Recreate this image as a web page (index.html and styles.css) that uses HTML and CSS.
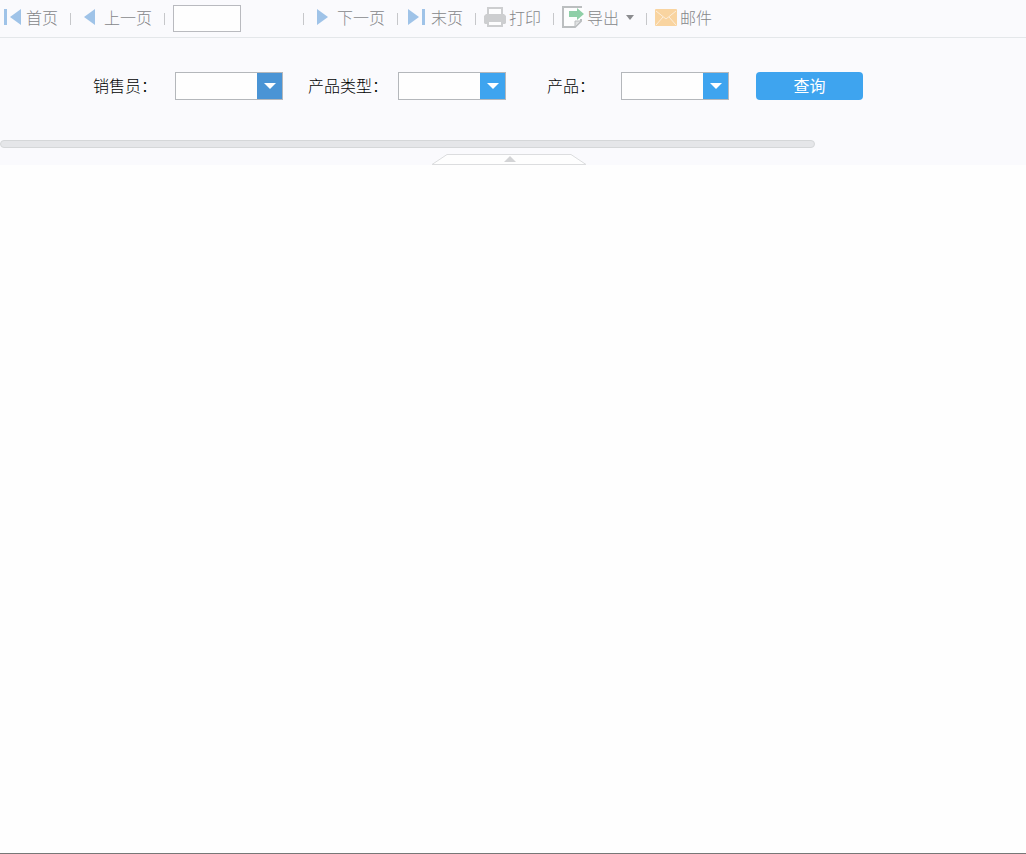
FILE: index.html
```
<!DOCTYPE html>
<html lang="zh-CN">
  <head>
    <meta charset="UTF-8" />
    <meta name="viewport" content="width=device-width, initial-scale=1.0" />
    <title>报表查询</title>
    <link rel="stylesheet" href="styles.css">
  </head>
  <body>
    <div class="toolbar">
      <button type="button" class="tool first">
        <svg width="18" height="16" viewBox="0 0 18 16"><path fill="#9fc3e8" d="M0 0h3v16H0zM17 0v16L6 8z" /></svg>
        首页
      </button>
      <span class="sep"></span>
      <button type="button" class="tool prev">
        <svg width="12" height="16" viewBox="0 0 12 16"><path fill="#9fc3e8" d="M11 0v16L0 8z" /></svg>
        上一页
      </button>
      <span class="sep"></span>
      <input type="text" class="page-input" aria-label="页码" />
      <span class="sep"></span>
      <button type="button" class="tool next">
        <svg width="12" height="16" viewBox="0 0 12 16"><path fill="#9fc3e8" d="M0 0v16l11-8z" /></svg>
        下一页
      </button>
      <span class="sep"></span>
      <button type="button" class="tool last">
        <svg width="18" height="16" viewBox="0 0 18 16"><path fill="#9fc3e8" d="M0 0v16l11-8zM14 0h3v16h-3z" /></svg>
        末页
      </button>
      <span class="sep"></span>
      <button type="button" class="tool print">
        <svg width="22" height="20" viewBox="0 0 22 20">
          <path fill="#cdced0" d="M2 7h18l2 2v7l-1 1H1l-1-1V9z" />
          <path fill="#fdfdfe" stroke="#cdced0" stroke-width="2" d="M4 1h14v7H4zM4 14h14v5H4z" />
        </svg>
        打印
      </button>
      <span class="sep"></span>
      <button type="button" class="tool export">
        <svg width="22" height="22" viewBox="0 0 22 22">
          <path fill="#fdfdfe" stroke="#bbbec0" stroke-width="2" d="M1 1h18v14l-6 6H1z" />
          <path fill="#dfe1e2" stroke="#bbbec0" d="M13 21v-6h6z" />
          <path fill="#fdfdfe" d="M17 2h5v11h-5z" />
          <path fill="#8fcfa8" d="M7 5h8V2l7 6-7 6v-3H7z" />
        </svg>
        导出
        <span class="caret"></span>
      </button>
      <span class="sep"></span>
      <button type="button" class="tool mail">
        <svg width="22" height="17" viewBox="0 0 22 17">
          <rect width="22" height="17" rx="1" fill="#f9d4a0" />
          <path fill="none" stroke="#fdeedb" d="M1 2l10 8 10-8M1 16l7-8M21 16l-7-8" />
        </svg>
        邮件
      </button>
    </div>

    <div class="panel">
      <form class="query">
        <label for="seller">销售员：</label>
        <div class="combo">
          <select id="seller" class="active"><option></option></select>
        </div>
        <label for="category">产品类型：</label>
        <div class="combo">
          <select id="category"><option></option></select>
        </div>
        <label for="product">产品：</label>
        <div class="combo">
          <select id="product"><option></option></select>
        </div>
        <button type="button" class="submit">查询</button>
      </form>
      <div class="scrollbar"></div>
      <button type="button" class="collapse" aria-label="收起">
        <svg width="156" height="11" viewBox="0 0 156 11">
          <path fill="#fefefe" stroke="#dcdddf" d="M1 10.5L16 .5h124l15 10z" />
          <path fill="#d3d4d6" d="M79 2l6 6H73z" />
        </svg>
      </button>
    </div>
  </body>
</html>
```

FILE: styles.css
```
* {
  box-sizing: border-box;
}
body {
  min-height: 100vh;
  margin: 0;
  border-bottom: 1px solid #777;
  background-color: #fefefe;
  color: #000;
  font-family: 'Noto Sans CJK SC', sans-serif;
  font-size: 16px;
  line-height: 24px;
}
button,
input,
select {
  font: inherit;
}
button {
  padding: 0;
  border: none;
  background: none;
  cursor: pointer;
}
svg {
  display: block;
  flex: none;
}

/* 工具栏 */
.toolbar {
  display: flex;
  align-items: center;
  height: 38px;
  padding-left: 4px;
  border-bottom: 1px solid #e4e7ea;
  background-color: #fafafd;
}
.tool {
  display: flex;
  align-items: center;
  gap: 4px;
  padding-bottom: 3px;
  color: #858689;
  font-weight: 300;
  white-space: nowrap;
}
.prev,
.next {
  gap: 8px;
  margin-left: 5px;
}
.last {
  gap: 5px;
  margin-left: 2px;
}
.print,
.export,
.mail {
  gap: 3px;
}
.sep {
  flex: none;
  width: 1px;
  height: 12px;
  margin: 0 8px 0 12px;
  background-color: #c6c7ca;
}
.page-input {
  width: 68px;
  height: 27px;
  margin-right: 50px;
  padding: 0 4px;
  border: 1px solid #b9babf;
  background-color: #fefefe;
}
.caret {
  margin-left: 4px;
  border: 4px solid transparent;
  border-top: 5px solid #8b8c8f;
  border-bottom: none;
}

/* 查询面板 */
.panel {
  padding-top: 34px;
  background-color: #fafafd;
}
.query {
  display: flex;
  align-items: center;
  padding-left: 77px;
}
.query label {
  width: 98px;
  padding: 0 2px 2px 0;
  font-weight: 300;
  text-align: center;
  white-space: nowrap;
}
.combo {
  display: grid;
  align-items: center;
  width: 108px;
  margin-right: 17px;
}
.combo select,
.combo::after {
  grid-area: 1 / 1;
}
.combo select {
  width: 100%;
  height: 28px;
  padding: 0 28px 0 4px;
  border: 1px solid #b4b7bb;
  border-radius: 0;
  background: linear-gradient(#3ea4ef, #3ea4ef) right / 25px 100% no-repeat #fefefe;
  appearance: none;
}
.combo select.active {
  background-image: linear-gradient(#4a94d5, #4a94d5);
}
.combo::after {
  content: '';
  z-index: 1;
  justify-self: end;
  margin-right: 7px;
  border: 6px solid transparent;
  border-top-color: #fff;
  border-bottom: none;
  pointer-events: none;
}
.submit {
  width: 107px;
  height: 28px;
  margin-left: 10px;
  padding-bottom: 2px;
  border-radius: 4px;
  background-color: #3ea4ef;
  color: #fff;
}
.scrollbar {
  max-width: 815px;
  height: 8px;
  margin-top: 40px;
  border: 1px solid #d5d7d9;
  border-radius: 4px;
  background-color: #e5e6e9;
}
.collapse {
  display: block;
  margin: 6px auto 0;
  padding-right: 8px;
}
```
